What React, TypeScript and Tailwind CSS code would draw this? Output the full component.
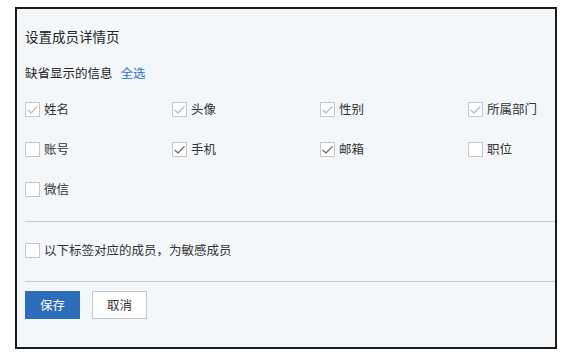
/**
 * 设置成员详情页 — 成员详情字段的显示设置面板
 */

type Field = {
    /** 字段名称 */
    label: string;
    /** 是否勾选 */
    checked?: boolean;
    /** 是否锁定（必选，灰色） */
    locked?: boolean;
};

const fields: Field[] = [
    { label: "姓名", checked: true, locked: true },
    { label: "头像", checked: true, locked: true },
    { label: "性别", checked: true, locked: true },
    { label: "所属部门", checked: true, locked: true },
    { label: "账号" },
    { label: "手机", checked: true },
    { label: "邮箱", checked: true },
    { label: "职位" },
    { label: "微信" },
];

function Checkbox({ checked, locked }: { checked?: boolean; locked?: boolean }) {
    return (
        <span className="flex h-[15px] w-[15px] shrink-0 items-center justify-center border border-[#c4c6c9] bg-white">
            {checked && (
                <svg width="13" height="13" viewBox="0 0 13 13" fill="none">
                    <path
                        d="M2 7.2 L5 10 L11.2 3.6"
                        stroke={locked ? "#b7b9bc" : "#6b6d70"}
                        strokeWidth="1.3"
                        strokeLinecap="round"
                        strokeLinejoin="round"
                    />
                </svg>
            )}
        </span>
    );
}

function FieldItem({ field }: { field: Field }) {
    return (
        <label className="flex h-[20px] items-center gap-[4px]">
            <Checkbox checked={field.checked} locked={field.locked} />
            <span className="text-[12.5px] leading-none text-[#333]">{field.label}</span>
        </label>
    );
}

export default function App() {
    return (
        <div
            className="min-h-screen bg-white pl-[15px] pt-[7px]"
            style={{ fontFamily: '"Noto Sans CJK SC", "Noto Sans", sans-serif' }}
        >
            <div className="h-[342px] w-[542px] border-2 border-[#1b1b1b] bg-[#f4f7fa]">
                {/* Header */}
                <div className="pl-[8px] pt-[18px]">
                    <h1 className="h-[18px] text-[13.5px] leading-[18px] text-[#222]">设置成员详情页</h1>
                    <div className="mt-[19px] flex h-[18px] items-center gap-[8px] text-[12.5px] leading-[18px]">
                        <span className="text-[#222]">缺省显示的信息</span>
                        <button className="text-[#2f74c8]">全选</button>
                    </div>

                    {/* Fields */}
                    <div className="mt-[17px] grid grid-cols-[147px_148px_148px_1fr] gap-y-[20px]">
                        {fields.map((f) => (
                            <FieldItem key={f.label} field={f} />
                        ))}
                    </div>
                </div>

                <div className="ml-[8px] mt-[22px] h-px bg-[#c6c9cd]" />

                {/* Sensitive members */}
                <div className="mt-[18px] pl-[8px]">
                    <label className="flex h-[20px] items-center gap-[4px]">
                        <Checkbox />
                        <span className="text-[12.5px] leading-none text-[#333]">
                            以下标签对应的成员，为敏感成员
                        </span>
                    </label>
                </div>

                <div className="ml-[8px] mt-[21px] h-px bg-[#c6c9cd]" />

                {/* Footer */}
                <div className="mt-[9px] flex gap-[12px] pl-[8px]">
                    <button className="h-[28px] w-[55px] bg-[#2d6cb9] text-[12.5px] text-white">保存</button>
                    <button className="h-[28px] w-[55px] border border-[#c4c6c9] bg-white text-[12.5px] text-[#333]">
                        取消
                    </button>
                </div>
            </div>
        </div>
    );
}
